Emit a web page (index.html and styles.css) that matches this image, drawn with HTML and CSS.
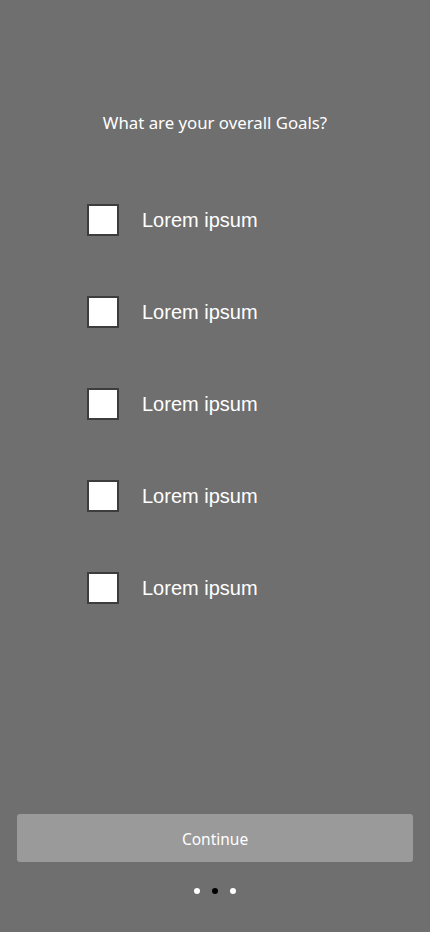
FILE: index.html
```html
<!DOCTYPE html>
<html lang="en">
<head>
<meta charset="utf-8">
<meta name="viewport" content="width=430, initial-scale=1">
<title>Goals</title>
<link rel="stylesheet" href="styles.css">
</head>
<body>
<main class="screen">
  <h1 class="title">What are your overall Goals?</h1>
  <ul class="goals">
    <li class="goal"><span class="box"></span><span class="label">Lorem ipsum</span></li>
    <li class="goal"><span class="box"></span><span class="label">Lorem ipsum</span></li>
    <li class="goal"><span class="box"></span><span class="label">Lorem ipsum</span></li>
    <li class="goal"><span class="box"></span><span class="label">Lorem ipsum</span></li>
    <li class="goal"><span class="box"></span><span class="label">Lorem ipsum</span></li>
  </ul>
  <div class="footer">
    <button class="continue" type="button">Continue</button>
    <div class="dots">
      <span class="dot"></span>
      <span class="dot active"></span>
      <span class="dot"></span>
    </div>
  </div>
</main>
</body>
</html>
```

FILE: styles.css
```css
* { box-sizing: border-box; }
html, body {
  margin: 0;
  padding: 0;
  background: #6f6f6f;
}
.screen {
  width: 430px;
  height: 932px;
  display: flex;
  flex-direction: column;
  background: #6f6f6f;
  color: #ffffff;
}
.title {
  margin: 0 0 69px;
  padding-top: 111px;
  text-align: center;
  font-family: "Noto Sans", "Open Sans", sans-serif;
  font-weight: 400;
  font-size: 16.8px;
  line-height: 24px;
  color: #ffffff;
}
.goals {
  list-style: none;
  margin: 0;
  padding: 0 0 0 87px;
  display: flex;
  flex-direction: column;
  gap: 60px;
}
.goal {
  display: flex;
  align-items: center;
  height: 32px;
}
.box {
  width: 32px;
  height: 32px;
  background: #ffffff;
  border: 2.5px solid #3d3d3d;
  flex: none;
}
.label {
  margin-left: 23px;
  font-family: "Liberation Sans", Arial, sans-serif;
  font-size: 20px;
  color: #ffffff;
}
.footer {
  margin-top: auto;
  padding: 0 17px 38px;
  display: flex;
  flex-direction: column;
  align-items: center;
}
.continue {
  width: 396px;
  height: 48px;
  border: none;
  border-radius: 3px;
  background: #9a9a9a;
  color: #ffffff;
  font-family: "Noto Sans", "Open Sans", sans-serif;
  font-size: 15.5px;
  line-height: 46px;
  padding: 2px 0 0;
}
.dots {
  margin-top: 26px;
  display: flex;
  gap: 12px;
}
.dot {
  width: 6px;
  height: 6px;
  border-radius: 50%;
  background: #ffffff;
}
.dot.active { background: #000000; }
```
